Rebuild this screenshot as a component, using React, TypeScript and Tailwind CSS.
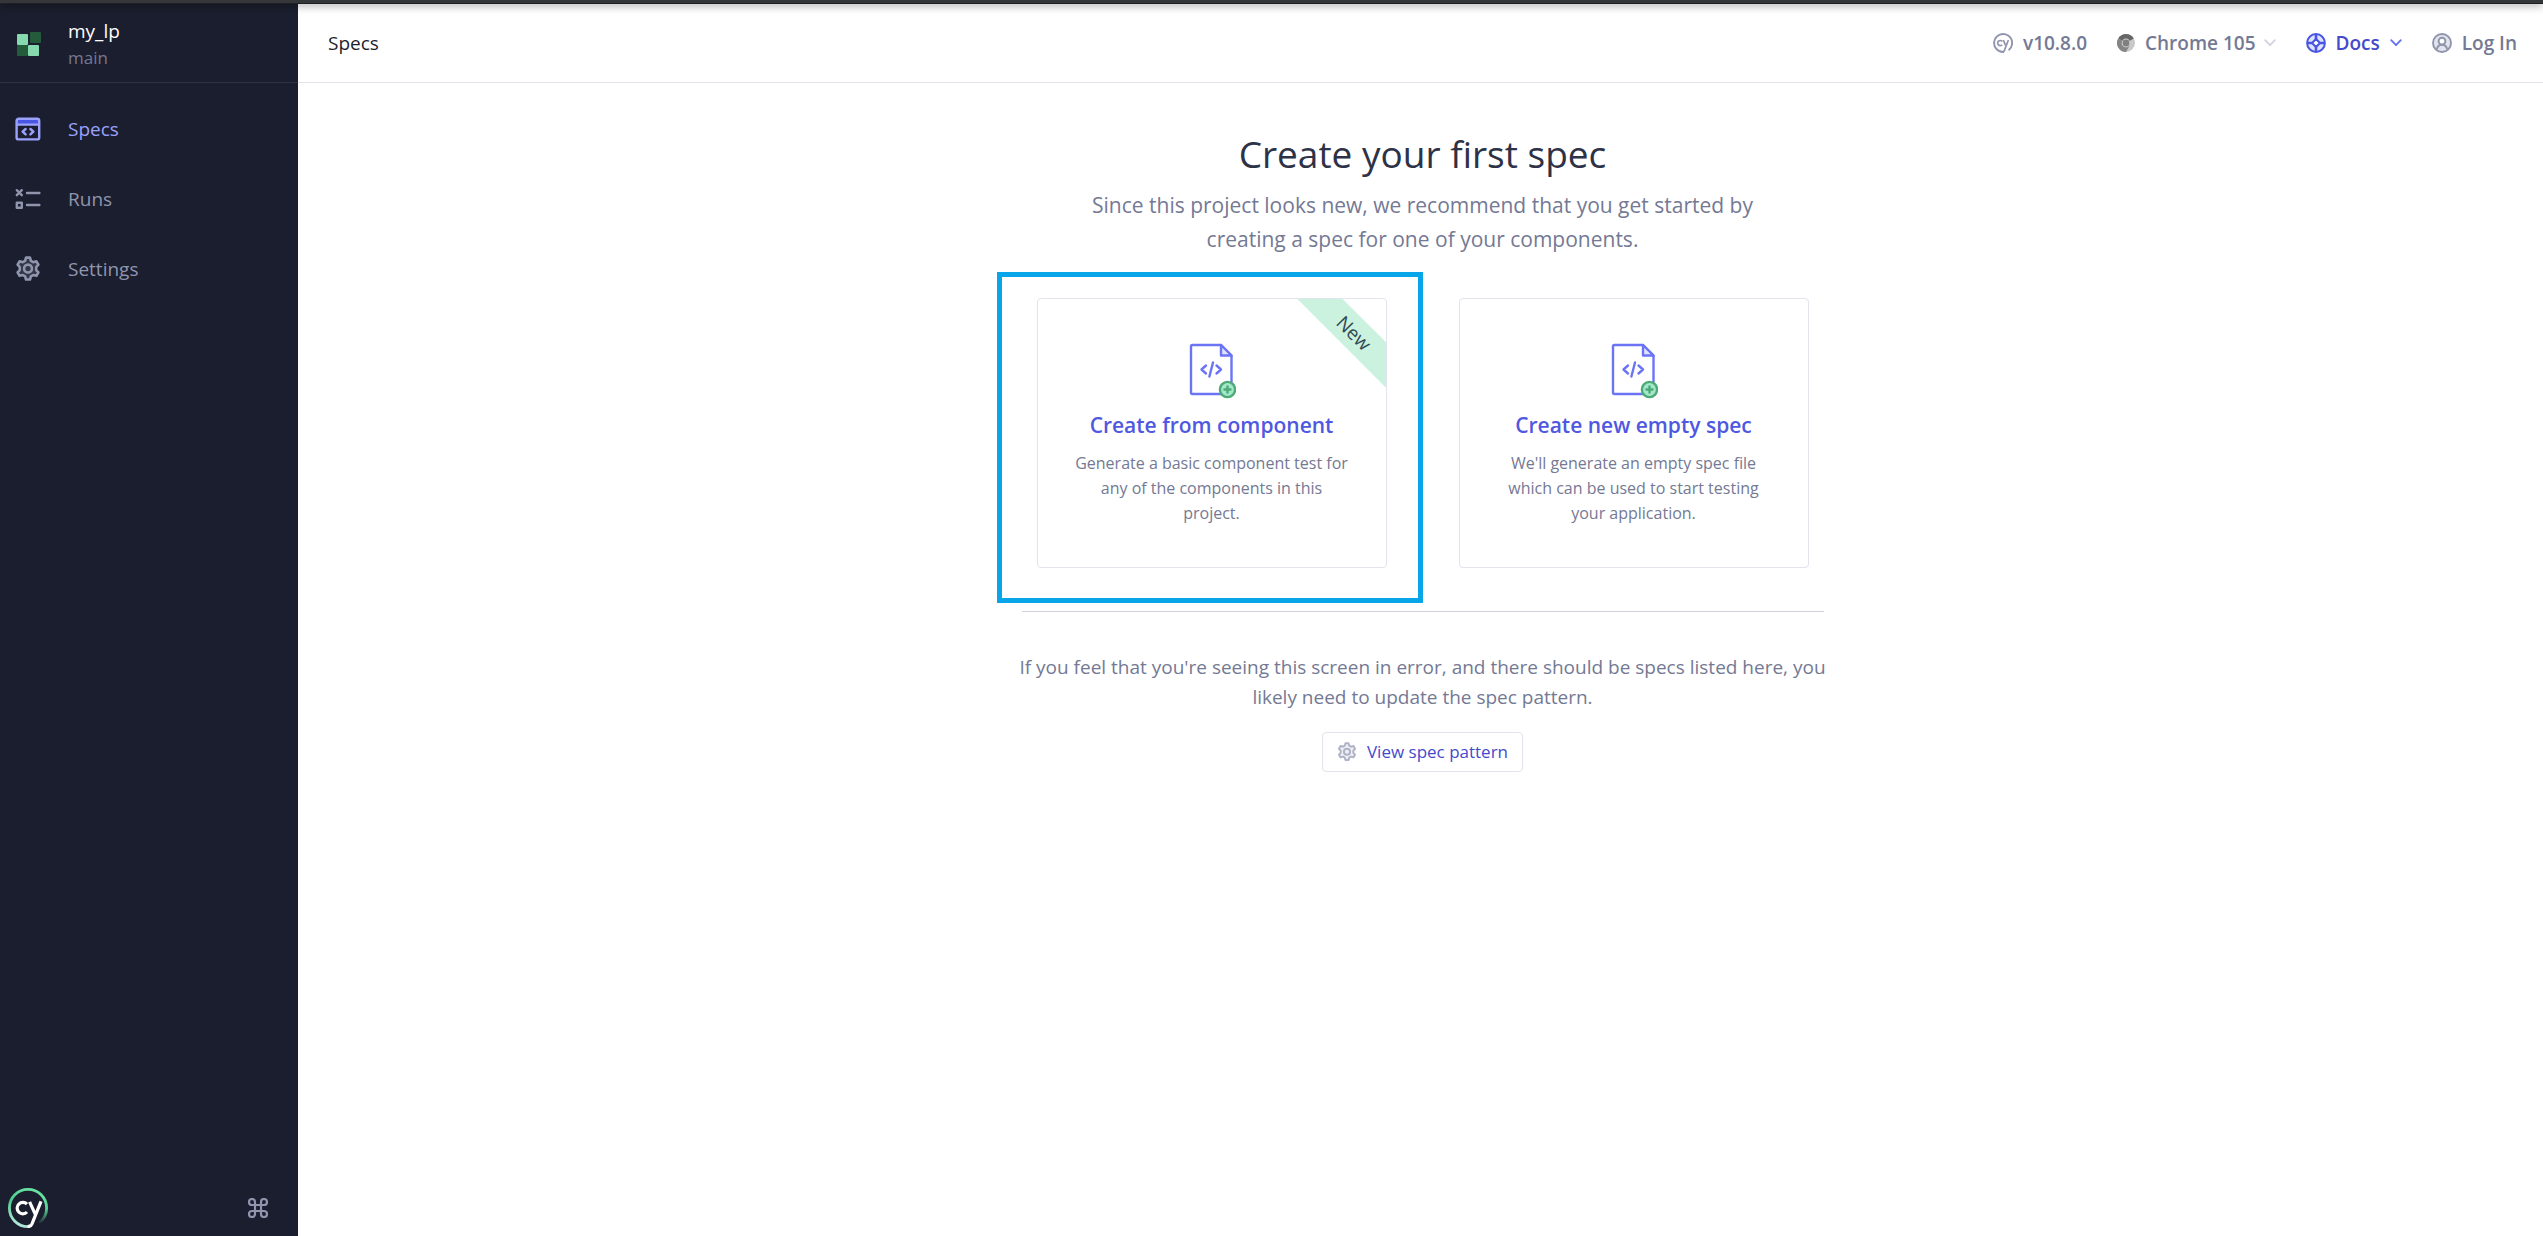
import React from "react";

type IconProps = { className?: string };

function ProjectLogo() {
  return (
    <svg viewBox="0 0 26 26" className="size-6.5" aria-hidden="true">
      <rect x="2" y="3" width="11" height="11" rx="1" fill="#86D9AE" />
      <rect x="15" y="1" width="11" height="11" rx="1" fill="#245B3B" />
      <rect x="2" y="14" width="11" height="11" rx="1" fill="#245B3B" />
      <rect x="13" y="14" width="11" height="11" rx="1" fill="#86D9AE" />
    </svg>
  );
}

function SpecsIcon({ className }: IconProps) {
  return (
    <svg viewBox="0 0 26 24" className={className} fill="none" stroke="#9AA2FC" strokeWidth="2.4" strokeLinecap="round" strokeLinejoin="round" aria-hidden="true">
      <path d="M2 3h22v4H2z" fill="#4956E3" stroke="none" />
      <rect x="1.6" y="1.8" width="22.6" height="20.6" rx="2" />
      <path d="M2 7.6h22M10.6 12l-3 2.7 3 2.7M15.4 12l3 2.7-3 2.7" />
    </svg>
  );
}

function RunsIcon({ className }: IconProps) {
  return (
    <svg viewBox="0 0 26 24" className={className} fill="none" stroke="#9095AD" strokeWidth="2.4" strokeLinecap="round" strokeLinejoin="round" aria-hidden="true">
      <path d="M1.8 3.2l5 5M6.8 3.2l-5 5M12 6h12.4M12 18h12.4M1.8 15.8h5v5h-5z" />
    </svg>
  );
}

const gear =
  "M10.6 1.6h3.8l.9 3 2.2 1.3 3.1-.8 1.9 3.3-2.1 2.3v2.8l2.1 2.3-1.9 3.3-3.1-.8-2.2 1.3-.9 3h-3.8l-.9-3-2.2-1.3-3.1.8-1.9-3.3 2.1-2.3v-2.8l-2.1-2.3 1.9-3.3 3.1.8 2.2-1.3z";

function GearIcon({ className }: IconProps) {
  return (
    <svg viewBox="0 0 25 25" className={className} stroke="currentColor" strokeWidth="2.5" strokeLinejoin="round" aria-hidden="true">
      <path d={gear} fill="currentColor" fillOpacity="0.2" />
      <circle cx="12.5" cy="12.1" r="3.8" fill="none" />
    </svg>
  );
}

function CypressMark({ className }: IconProps) {
  return (
    <svg viewBox="0 0 40 40" className={className} fill="none" aria-hidden="true">
      <defs>
        <linearGradient id="ring" x1="10" y1="38" x2="26" y2="2" gradientUnits="userSpaceOnUse">
          <stop offset="0" stopColor="#B9E9DD" />
          <stop offset="0.5" stopColor="#4CC790" />
          <stop offset="1" stopColor="#69E3A0" />
        </linearGradient>
        <linearGradient id="tail" x1="38" y1="20" x2="31" y2="36" gradientUnits="userSpaceOnUse">
          <stop offset="0" stopColor="#5BD598" />
          <stop offset="1" stopColor="#5BD598" stopOpacity="0" />
        </linearGradient>
      </defs>
      <path d="M38.6 20A18.6 18.6 0 1 0 20 38.6" stroke="url(#ring)" strokeWidth="2.8" />
      <path d="M38.6 20a18.6 18.6 0 0 1-7.4 14.8" stroke="url(#tail)" strokeWidth="2.8" />
      <path d="M19 16.2a5.7 5.7 0 1 0 0 7.8" stroke="#fff" strokeWidth="3.2" />
      <path d="M21.6 13.8l5.6 12.4M33 13.4l-9 22.4q-1.2 2.8-4.4 2.8" stroke="#fff" strokeWidth="3.2" />
    </svg>
  );
}

function CypressOutline({ className }: IconProps) {
  return (
    <svg viewBox="0 0 20 20" className={className} fill="none" stroke="#9095AD" aria-hidden="true">
      <path d="M15.6 17.2A9 9 0 1 0 11 19" strokeWidth="1.9" />
      <path d="M9.2 8.4a2.6 2.6 0 1 0 0 3.4M10.3 7.2l2.3 5.2M15.4 7l-3.6 9.4q-.5 1.6-1.8 2.6" strokeWidth="1.7" />
    </svg>
  );
}

function ChromeIcon({ className }: IconProps) {
  return (
    <svg viewBox="0 0 20 20" className={className} aria-hidden="true">
      <circle cx="9" cy="10" r="9" fill="#C9C9C9" />
      <path d="M9 10L1.2 5.5A9 9 0 0 1 16.8 5.5z" fill="#666666" />
      <path d="M1.2 5.5A9 9 0 0 0 9 19l4-7L9 10z" fill="#858585" />
      <circle cx="9" cy="10" r="4.4" fill="#D0D0D0" />
      <circle cx="9" cy="10" r="3.4" fill="#808080" />
    </svg>
  );
}

function DocsIcon({ className }: IconProps) {
  return (
    <svg viewBox="0 0 20 20" className={className} fill="none" stroke="#4956E3" strokeWidth="2" aria-hidden="true">
      <circle cx="10" cy="10" r="8.9" fill="#E0E2FE" />
      <path d="M10 1v5M10 14v5M1 10h5M14 10h5" strokeWidth="2.6" />
      <path d="M10 6l4 4-4 4-4-4z" fill="#fff" strokeWidth="2.2" strokeLinejoin="round" />
    </svg>
  );
}

function UserIcon({ className }: IconProps) {
  return (
    <svg viewBox="0 0 20 20" className={className} fill="none" stroke="#9095AD" strokeWidth="1.9" aria-hidden="true">
      <circle cx="10" cy="10" r="9" fill="#E1E3ED" />
      <circle cx="10" cy="8.2" r="3.4" fill="#fff" />
      <path d="M4.8 16.4c.6-3 2.6-4.6 5.2-4.6s4.6 1.6 5.2 4.6" />
    </svg>
  );
}

function Chevron({ className }: IconProps) {
  return (
    <svg viewBox="0 0 12 8" className={className} fill="none" stroke="currentColor" strokeWidth="1.8" strokeLinecap="round" strokeLinejoin="round" aria-hidden="true">
      <path d="M1.2 1.2L6 6.2l4.8-5" />
    </svg>
  );
}

function CommandIcon({ className }: IconProps) {
  return (
    <svg viewBox="0 0 20 20" className={className} fill="none" stroke="#9095AD" strokeWidth="2.2" aria-hidden="true">
      <path d="M7 7h6v6H7zM7 7H4a3 3 0 1 1 3-3zM13 7V4a3 3 0 1 1 3 3zM13 13h3a3 3 0 1 1-3 3zM7 13v3a3 3 0 1 1-3-3z" />
    </svg>
  );
}

function SpecFileIcon() {
  return (
    <svg viewBox="-1 0 48 56" className="h-14 w-12" fill="none" stroke="#6B74F5" strokeWidth="2.4" strokeLinecap="round" strokeLinejoin="round" aria-hidden="true">
      <path d="M32 2H3.5A1.5 1.5 0 0 0 2 3.5v46A1.5 1.5 0 0 0 3.5 51H41a1.5 1.5 0 0 0 1.5-1.5V12.5z" />
      <path d="M32 2v10.5h10.5z" fill="#E0E2FE" />
      <path d="M17 22.5l-4.5 4 4.5 4M27.5 22.5l4.500 4-4.500 4M24 19.500l-3.600 14" />
      <circle cx="38.5" cy="46.5" r="7.6" fill="#A3E7CB" stroke="#4BAA76" />
      <path d="M38.5 43.5v6M35.5 46.5h6" stroke="#4BAA76" />
    </svg>
  );
}

const navItems = [
  { label: "Specs", Icon: SpecsIcon, active: true },
  { label: "Runs", Icon: RunsIcon, active: false },
  { label: "Settings", Icon: GearIcon, active: false },
];

function Sidebar() {
  return (
    <aside className="flex w-[298px] shrink-0 flex-col bg-[#1B1E2E]">
      <div className="flex h-[79px] items-center gap-6.75 border-b border-[#2E3247] pt-0.5 pl-3.75">
        <ProjectLogo />
        <div>
          <div className="text-[19px] leading-7 font-medium text-white">my_lp</div>
          <div className="text-[17px] leading-6.5 text-[#747994]">main</div>
        </div>
      </div>
      <nav className="flex flex-col gap-5 pt-5.25">
        {navItems.map(({ label, Icon, active }) => (
          <a
            key={label}
            href="#"
            className={
              active
                ? "flex h-12.5 items-center gap-6.75 pl-3.75 text-[19px] text-[#9AA2FC]"
                : "flex h-12.5 items-center gap-6.75 pl-3.75 text-[19px] text-[#9095AD]"
            }
          >
            <Icon className="size-6.5" />
            {label}
          </a>
        ))}
      </nav>
      <div className="mt-auto flex items-center justify-between pr-7.5 pb-2 pl-2">
        <a href="#" aria-label="Cypress">
          <CypressMark className="size-10" />
        </a>
        <button type="button" aria-label="Keyboard shortcuts">
          <CommandIcon className="size-5" />
        </button>
      </div>
    </aside>
  );
}

function Header() {
  return (
    <header className="flex h-[79px] items-center justify-between border-b border-[#E1E3ED] pr-6.5 pl-7.5">
      <h1 className="text-[19px] text-[#1B1E2E]">Specs</h1>
      <div className="flex items-center gap-7.5 text-[19px] font-semibold text-[#747994]">
        <a href="#" className="flex items-center gap-2.5">
          <CypressOutline className="size-5" />
          v10.8.0
        </a>
        <button type="button" className="flex items-center gap-2">
          <ChromeIcon className="size-5" />
          Chrome 105
          <Chevron className="h-2 w-3 text-[#D0D2E0]" />
        </button>
        <button type="button" className="flex items-center gap-2.5 text-[#4549CC]">
          <DocsIcon className="size-5" />
          Docs
          <Chevron className="h-2 w-3 text-[#6470F3]" />
        </button>
        <button type="button" className="flex items-center gap-2.5">
          <UserIcon className="size-5" />
          Log In
        </button>
      </div>
    </header>
  );
}

type CardProps = { title: string; text: string; isNew?: boolean };

function SpecCard({ title, text, isNew }: CardProps) {
  return (
    <button type="button" className="relative flex h-[270px] w-[350px] flex-col items-center overflow-hidden rounded-sm border border-[#E1E3ED] px-8.5 pt-11">
      {isNew && (
        <span className="absolute top-4.5 -right-10 w-36 rotate-45 bg-[#CBF1DF] text-center text-[19px] leading-8 text-[#2E4B50]">
          New
        </span>
      )}
      <SpecFileIcon />
      <span className="mt-2.5 text-[21px] leading-8 font-semibold text-[#4F58E0]">{title}</span>
      <span className="mt-2.5 text-base leading-6.25 text-[#747994]">{text}</span>
    </button>
  );
}

export default function App() {
  return (
    <div className="flex min-h-screen flex-col bg-white font-['Open_Sans',sans-serif]">
      <div className="z-10 h-1 shrink-0 border-b border-[#1D1F22] bg-[#35363A] shadow-[0_1px_8px_rgba(0,0,0,0.5)]" />
      <div className="flex grow">
        <Sidebar />
        <div className="flex grow flex-col">
          <Header />
          <main className="flex flex-col items-center pt-11.5 pl-1 text-center">
            <h2 className="text-[37px] leading-12.5 text-[#2E3247]">Create your first spec</h2>
            <p className="mt-2.25 w-[700px] text-[21px] leading-8.5 text-[#747994]">
              Since this project looks new, we recommend that you get started by creating a spec for one of your components.
            </p>
            <div className="mt-4 flex w-[852px] items-start">
              <div className="flex h-[331px] w-[426px] justify-center border-5 border-[#08A5E9] pt-5.25 pl-1">
                <SpecCard isNew title="Create from component" text="Generate a basic component test for any of the components in this project." />
              </div>
              <div className="pt-6.5 pl-9">
                <SpecCard title="Create new empty spec" text="We'll generate an empty spec file which can be used to start testing your application." />
              </div>
            </div>
            <hr className="mt-2 w-[802px] border-[#D0D2E0]" />
            <p className="mt-10 w-[820px] text-[19px] leading-7.5 text-[#747994]">
              If you feel that you're seeing this screen in error, and there should be specs listed here, you likely need to update the spec pattern.
            </p>
            <button type="button" className="mt-5 flex h-10 items-center gap-2.5 rounded-sm border border-[#E1E3ED] px-3.5 text-[17px] text-[#4549CC]">
              <GearIcon className="size-5 text-[#AFB3C7]" />
              View spec pattern
            </button>
          </main>
        </div>
      </div>
    </div>
  );
}
